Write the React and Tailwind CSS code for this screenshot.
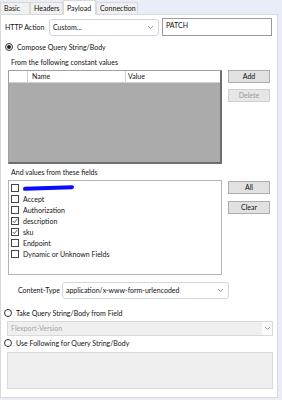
import React from 'react';

const FONT = { fontFamily: 'Lato, "Noto Sans", sans-serif' };

const fields = [
  { name: null, checked: false },
  { name: 'Accept', checked: false },
  { name: 'Authorization', checked: false },
  { name: 'description', checked: true },
  { name: 'sku', checked: true },
  { name: 'Endpoint', checked: false },
  { name: 'Dynamic or Unknown Fields', checked: false },
];

const Chevron = ({ className }) => (
  <svg className={className} width="7" height="5" viewBox="0 0 7 5" fill="none">
    <polyline points="1,1 3.5,3.5 6,1" stroke="#8a8a8a" strokeWidth="0.9" />
  </svg>
);

const Radio = ({ checked, label }) => (
  <div className="flex items-center h-[10px]">
    <span className="w-[8px] h-[8px] rounded-full border border-[#333] bg-white flex items-center justify-center">
      {checked && <span className="w-[4px] h-[4px] rounded-full bg-[#222]" />}
    </span>
    <span className="ml-[4px] leading-[10px] whitespace-nowrap">{label}</span>
  </div>
);

const CheckBox = ({ checked }) => (
  <span className="w-[8px] h-[8px] border border-[#444] bg-white flex items-center justify-center shrink-0">
    {checked && (
      <svg width="6" height="6" viewBox="0 0 6 6" fill="none">
        <polyline points="0.8,3 2.3,4.6 5.3,0.9" stroke="#333" strokeWidth="0.8" />
      </svg>
    )}
  </span>
);

const Button = ({ children, disabled }) => (
  <div
    className={
      'w-[42px] h-[13px] flex items-center justify-center border leading-[11px] ' +
      (disabled ? 'bg-[#e6e6e6] border-[#d0d0d0] text-[#9a9a9a]' : 'bg-[#e1e1e1] border-[#adadad] text-[#111]')
    }
  >
    {children}
  </div>
);

const Tab = ({ label, width, active }) => (
  <div
    className={
      'flex items-center pl-[3px] border border-b-0 leading-[11px] whitespace-nowrap ' +
      (active ? 'h-[15px] bg-white border-[#d9d9d9] relative z-10 -mb-px' : 'h-[12px] bg-[#f0f0f0] border-[#d9d9d9]')
    }
    style={{ width }}
  >
    {label}
  </div>
);

export default function App() {
  return (
    <div className="w-[282px] h-[400px] bg-[#e9edf7] overflow-hidden text-[7px] text-[#111]" style={FONT}>
      {/* tabs */}
      <div className="flex items-end h-[14px]">
        <Tab label="Basic" width={30} />
        <Tab label="Headers" width={33} />
        <Tab label="Payload" width={33} active />
        <Tab label="Connection" width={42} />
      </div>

      {/* panel */}
      <div className="w-[278px] h-[384px] bg-white border border-[#d9d9d9] flex flex-col">
        {/* HTTP Action row */}
        <div className="flex items-center h-[18px] mt-[3px]">
          <span className="ml-[4px] w-[44px] whitespace-nowrap">HTTP Action</span>
          <div className="w-[110px] h-[17px] rounded-[3px] border border-[#cfd6e4] flex items-center justify-between pl-[3px] pr-[4px]">
            <span>Custom...</span>
            <Chevron />
          </div>
          <div className="ml-[3px] w-[110px] h-[18px] border border-[#9a9a9a] pl-[3px] pt-[1px] leading-[10px]">PATCH</div>
        </div>

        <div className="mt-[6px] ml-[4px]">
          <Radio checked label="Compose Query String/Body" />
        </div>

        <div className="mt-[5px] ml-[10px] h-[10px] leading-[10px]">From the following constant values</div>

        {/* constant values table */}
        <div className="flex mt-[3px]">
          <div className="ml-[7px] w-[214px] h-[94px] border border-[#a0a0a0] border-r-2 border-b-2 border-r-[#6e6e6e] border-b-[#6e6e6e] bg-[#ababab] flex flex-col">
            <div className="h-[12px] bg-white flex leading-[11px] border-b border-[#d0d0d0]">
              <div className="w-[19px] border-r border-[#d0d0d0]" />
              <div className="w-[98px] pl-[4px] border-r border-[#d0d0d0]">Name</div>
              <div className="pl-[2px]">Value</div>
            </div>
          </div>
          <div className="ml-[6px] flex flex-col gap-[6px]">
            <Button>Add</Button>
            <Button disabled>Delete</Button>
          </div>
        </div>

        <div className="mt-[3px] ml-[10px] h-[10px] leading-[10px]">And values from these fields</div>

        {/* fields list */}
        <div className="flex mt-[3px]">
          <div className="ml-[7px] w-[214px] h-[95px] border border-[#b4b4b4] pt-[1px] pl-[2px] flex flex-col">
            {fields.map((f, i) => (
              <div key={i} className="flex items-center h-[11px]">
                <CheckBox checked={f.checked} />
                {f.name ? (
                  <span className="ml-[4px] leading-[10px]">{f.name}</span>
                ) : (
                  <span className="ml-[4px] w-[51px] h-[4px] rounded-[2px] bg-[#0a0aff] -skew-y-2" />
                )}
              </div>
            ))}
          </div>
          <div className="ml-[6px] mt-[1px] flex flex-col gap-[7px]">
            <Button>All</Button>
            <Button>Clear</Button>
          </div>
        </div>

        {/* content type */}
        <div className="flex items-center mt-[7px] h-[17px]">
          <span className="ml-[17px] whitespace-nowrap">Content-Type</span>
          <div className="ml-[2px] w-[167px] h-[17px] rounded-[3px] border border-[#cfd6e4] flex items-center justify-between pl-[3px] pr-[4px]">
            <span className="whitespace-nowrap">application/x-www-form-urlencoded</span>
            <Chevron />
          </div>
        </div>

        <div className="mt-[9px] ml-[3px]">
          <Radio label="Take Query String/Body from Field" />
        </div>

        <div className="mt-[3px] ml-[6px] w-[266px] h-[15px] bg-[#efefef] border border-[#d9d9d9] flex items-center justify-between">
          <span className="pl-[3px] text-[#a5a5a5]">Flexport-Version</span>
          <div className="w-[10px] h-full bg-[#fafafa] flex items-center justify-center">
            <Chevron />
          </div>
        </div>

        <div className="mt-[2px] ml-[3px]">
          <Radio label="Use Following for Query String/Body" />
        </div>

        <div className="mt-[4px] ml-[6px] w-[266px] h-[37px] bg-[#efefef] border border-[#d9d9d9]" />
      </div>
    </div>
  );
}
